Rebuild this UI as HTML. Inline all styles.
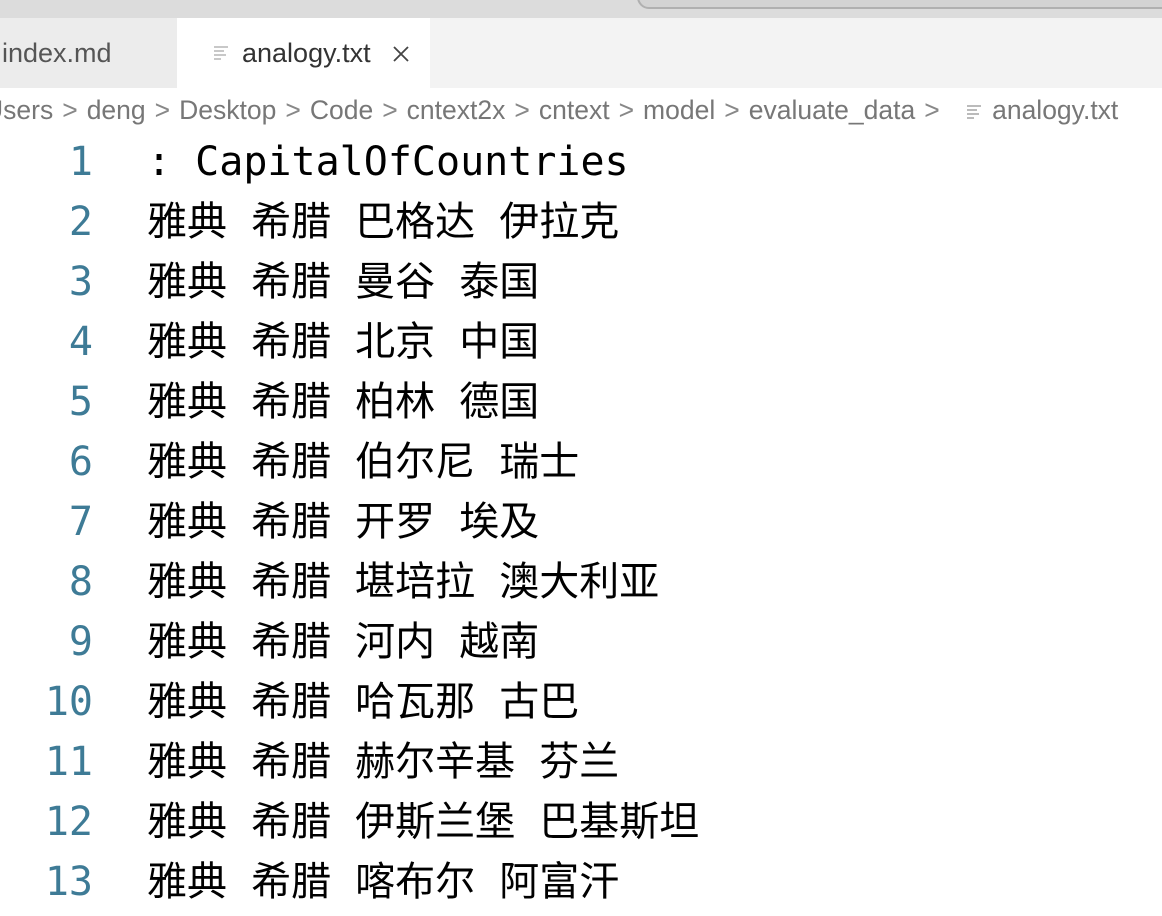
<!DOCTYPE html>
<html><head><meta charset="utf-8"><style>
html,body{margin:0;padding:0;}
body{width:1162px;height:916px;background:#fff;position:relative;overflow:hidden;font-family:"Liberation Sans","Noto Sans CJK SC",sans-serif;}
.top{position:absolute;left:0;top:0;width:1162px;height:18px;background:#dcdcdc;}
.pill{position:absolute;left:637px;top:-20px;width:600px;height:25px;border:2px solid #b0b0b0;border-radius:12px;background:#d3d3d3;}
.tabs{position:absolute;left:0;top:18px;width:1162px;height:70px;background:#f3f3f3;}
.t1{position:absolute;left:0;top:0;width:177px;height:70px;background:#ececec;}
.t1 span{position:absolute;left:2px;top:20px;font-size:27px;color:#555;}
.t2{position:absolute;left:177px;top:0;width:253px;height:70px;background:#fff;}
.t2 .nm{position:absolute;left:65px;top:20px;font-size:27px;color:#333;}
.t2 .x{position:absolute;left:214px;top:26px;}
.ic{position:absolute;}
.bc{position:absolute;left:-16px;top:95px;font-size:26.5px;color:#777;white-space:nowrap;}
.bc i{font-style:normal;color:#888;padding:0 9px;}
.ln{position:absolute;right:1069px;width:100px;text-align:right;font-family:"DejaVu Sans Mono","Liberation Mono",monospace;font-size:40px;color:#3e7b96;height:60px;line-height:60px;}
.tx{position:absolute;left:147px;font-family:"DejaVu Sans Mono","Noto Sans CJK SC",monospace;font-size:40px;color:#000;height:60px;line-height:60px;white-space:pre;}
</style></head><body>
<div class="top"><div class="pill"></div></div>
<div class="tabs">
 <div class="t1"><span>index.md</span></div>
 <div class="t2">
  <svg class="ic" style="left:36px;top:27px" width="16" height="16" viewBox="0 0 16 16"><g stroke="#bbb" stroke-width="1.6"><line x1="1" y1="2" x2="15" y2="2"/><line x1="1" y1="6" x2="11" y2="6"/><line x1="1" y1="10" x2="13" y2="10"/><line x1="1" y1="14" x2="8" y2="14"/></g></svg>
  <span class="nm">analogy.txt</span>
  <svg class="x" width="20" height="20" viewBox="0 0 20 20"><path d="M3 3L17 17M17 3L3 17" stroke="#444" stroke-width="1.8"/></svg>
 </div>
</div>
<div class="bc">Users<i>&gt;</i>deng<i>&gt;</i>Desktop<i>&gt;</i>Code<i>&gt;</i>cntext2x<i>&gt;</i>cntext<i>&gt;</i>model<i>&gt;</i>evaluate_data<i>&gt;</i> <svg width="16" height="16" viewBox="0 0 16 16" style="margin:0 10px 0 10px;vertical-align:-1px"><g stroke="#aaa" stroke-width="1.6"><line x1="1" y1="2" x2="15" y2="2"/><line x1="1" y1="6" x2="11" y2="6"/><line x1="1" y1="10" x2="13" y2="10"/><line x1="1" y1="14" x2="8" y2="14"/></g></svg>analogy.txt</div>

<div class="ln" style="top:132px">1</div><div class="tx" style="top:132px">: CapitalOfCountries</div>
<div class="ln" style="top:192px">2</div><div class="tx" style="top:192px">雅典 希腊 巴格达 伊拉克</div>
<div class="ln" style="top:252px">3</div><div class="tx" style="top:252px">雅典 希腊 曼谷 泰国</div>
<div class="ln" style="top:312px">4</div><div class="tx" style="top:312px">雅典 希腊 北京 中国</div>
<div class="ln" style="top:372px">5</div><div class="tx" style="top:372px">雅典 希腊 柏林 德国</div>
<div class="ln" style="top:432px">6</div><div class="tx" style="top:432px">雅典 希腊 伯尔尼 瑞士</div>
<div class="ln" style="top:492px">7</div><div class="tx" style="top:492px">雅典 希腊 开罗 埃及</div>
<div class="ln" style="top:552px">8</div><div class="tx" style="top:552px">雅典 希腊 堪培拉 澳大利亚</div>
<div class="ln" style="top:612px">9</div><div class="tx" style="top:612px">雅典 希腊 河内 越南</div>
<div class="ln" style="top:672px">10</div><div class="tx" style="top:672px">雅典 希腊 哈瓦那 古巴</div>
<div class="ln" style="top:732px">11</div><div class="tx" style="top:732px">雅典 希腊 赫尔辛基 芬兰</div>
<div class="ln" style="top:792px">12</div><div class="tx" style="top:792px">雅典 希腊 伊斯兰堡 巴基斯坦</div>
<div class="ln" style="top:852px">13</div><div class="tx" style="top:852px">雅典 希腊 喀布尔 阿富汗</div>
</body></html>
